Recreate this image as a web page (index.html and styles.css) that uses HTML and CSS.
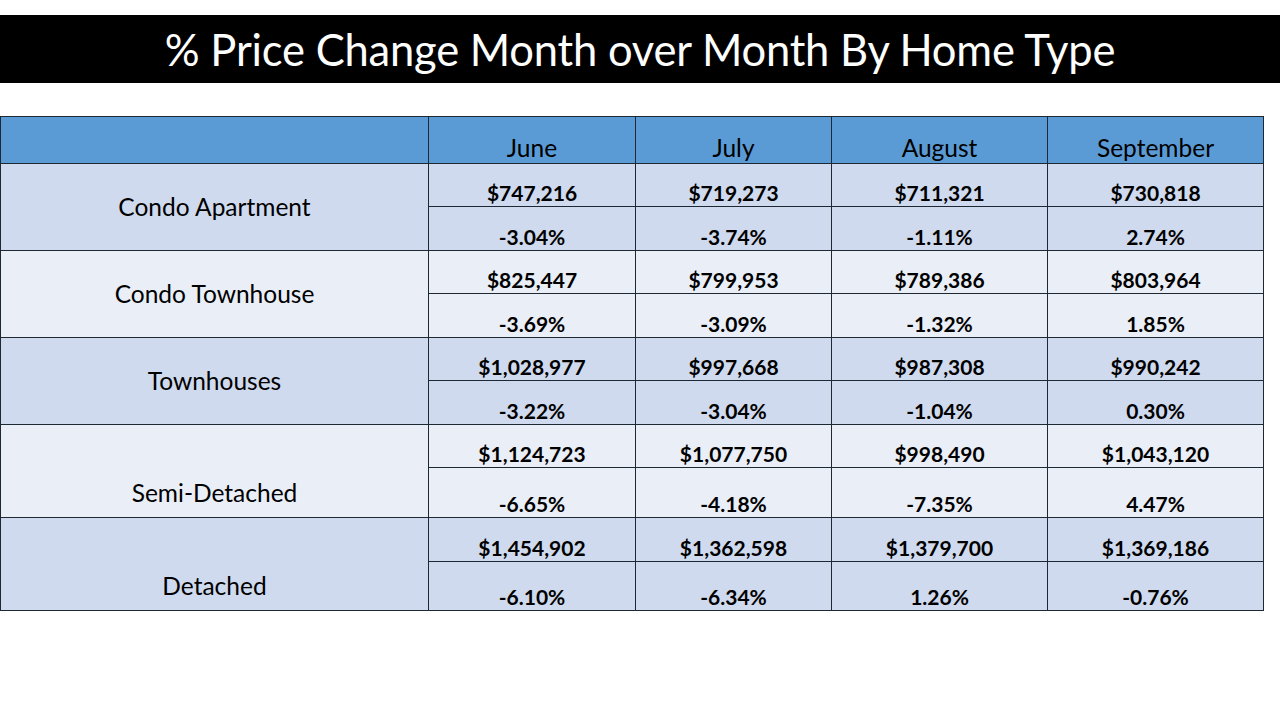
FILE: index.html
```html
<!DOCTYPE html>
<html lang="en">
<head>
<meta charset="utf-8">
<title>% Price Change Month over Month By Home Type</title>
<link rel="stylesheet" href="styles.css">
</head>
<body>
<div class="slide">
  <h1 class="title">% Price Change Month over Month By Home Type</h1>
  <table class="prices">
    <colgroup>
      <col class="c-label"><col class="c-jun"><col class="c-jul"><col class="c-aug"><col class="c-sep">
    </colgroup>
    <thead>
      <tr class="head">
        <th></th><th>June</th><th>July</th><th>August</th><th>September</th>
      </tr>
    </thead>
    <tbody>
      <tr class="dark r43">
        <td class="label" rowspan="2">Condo Apartment</td>
        <td>$747,216</td><td>$719,273</td><td>$711,321</td><td>$730,818</td>
      </tr>
      <tr class="dark r44">
        <td>-3.04%</td><td>-3.74%</td><td>-1.11%</td><td>2.74%</td>
      </tr>
      <tr class="light r43">
        <td class="label" rowspan="2">Condo Townhouse</td>
        <td>$825,447</td><td>$799,953</td><td>$789,386</td><td>$803,964</td>
      </tr>
      <tr class="light r44">
        <td>-3.69%</td><td>-3.09%</td><td>-1.32%</td><td>1.85%</td>
      </tr>
      <tr class="dark r43">
        <td class="label" rowspan="2">Townhouses</td>
        <td>$1,028,977</td><td>$997,668</td><td>$987,308</td><td>$990,242</td>
      </tr>
      <tr class="dark r44">
        <td>-3.22%</td><td>-3.04%</td><td>-1.04%</td><td>0.30%</td>
      </tr>
      <tr class="light r43">
        <td class="label low" rowspan="2">Semi-Detached</td>
        <td>$1,124,723</td><td>$1,077,750</td><td>$998,490</td><td>$1,043,120</td>
      </tr>
      <tr class="light r50">
        <td>-6.65%</td><td>-4.18%</td><td>-7.35%</td><td>4.47%</td>
      </tr>
      <tr class="dark r44">
        <td class="label low" rowspan="2">Detached</td>
        <td>$1,454,902</td><td>$1,362,598</td><td>$1,379,700</td><td>$1,369,186</td>
      </tr>
      <tr class="dark r49">
        <td>-6.10%</td><td>-6.34%</td><td>1.26%</td><td>-0.76%</td>
      </tr>
    </tbody>
  </table>
</div>
</body>
</html>
```
FILE: styles.css
```css
html, body {
  margin: 0;
  padding: 0;
  background: #ffffff;
}
body {
  font-family: Lato, "Open Sans", "Liberation Sans", sans-serif;
  color: #000;
}
.slide {
  width: 1280px;
  height: 720px;
  padding-top: 15px;
  box-sizing: border-box;
}
.title {
  margin: 0;
  height: 68px;
  background: #000;
  color: #fff;
  font-weight: 400;
  font-size: 43.5px;
  line-height: 68px;
  text-align: center;
  letter-spacing: -0.2px;
}
.prices {
  margin-top: 33px;
  border-collapse: collapse;
  table-layout: fixed;
  width: 1263px;
}
.c-label { width: 428px; }
.c-jun { width: 207px; }
.c-jul { width: 196px; }
.c-aug { width: 216px; }
.c-sep { width: 216px; }
.prices th, .prices td {
  border: 1px solid #1e2833;
  padding: 0 0 1px 0;
  text-align: center;
  vertical-align: bottom;
  font-size: 21px;
  line-height: 24px;
  font-weight: 700;
}
.prices th {
  font-weight: 400;
  font-size: 24.5px;
  padding-bottom: 3px;
}
.head { height: 47px; background: #5b9bd5; }
.dark { background: #cfdaee; }
.light { background: #e9eef7; }
.r43 { height: 43px; }
.r44 { height: 44px; }
.r49 { height: 49px; }
.r50 { height: 50px; }
.prices td.label {
  font-weight: 400;
  font-size: 24.5px;
  vertical-align: middle;
  padding: 0;
}
.prices td.label.low {
  vertical-align: bottom;
  padding-bottom: 12px;
}
```
